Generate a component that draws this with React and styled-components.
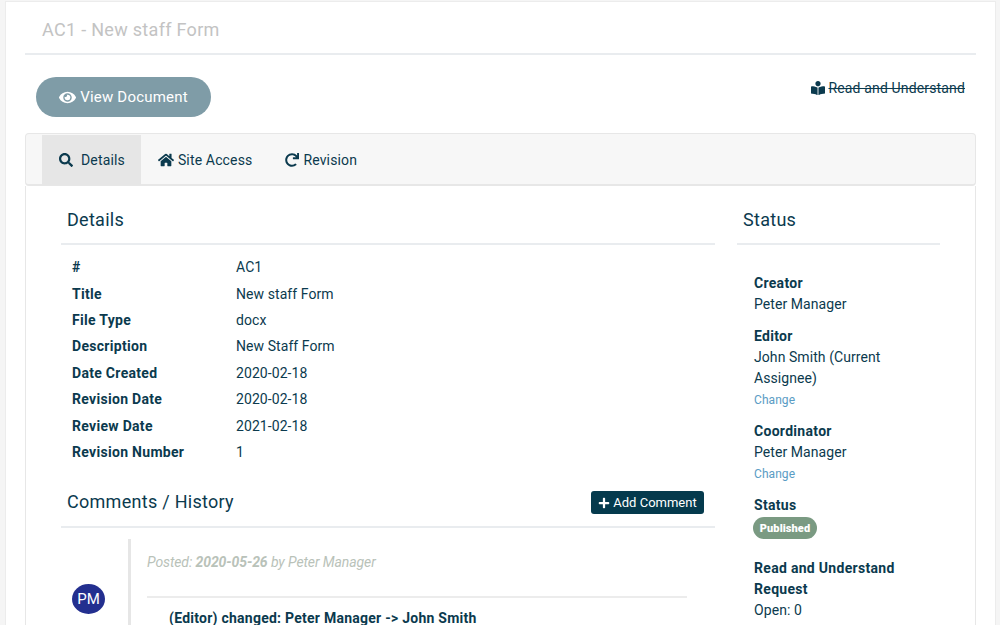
import React from 'react';
import styled, { createGlobalStyle } from 'styled-components';
import { FaEye, FaSearch, FaHome, FaRedo, FaBookReader, FaPlus } from 'react-icons/fa';

const ink = '#0b3a4e';

const Global = createGlobalStyle`
  html, body { margin: 0; height: 625px; overflow: hidden; background: #f5f5f5; }
  body { font-family: Roboto, "Liberation Sans", sans-serif; font-size: 14px; letter-spacing: .07px; color: ${ink}; }
  * { box-sizing: border-box; }
`;

const Panel = styled.main`
  margin: 1px 4px 0 5px;
  height: 640px;
  background: #fff;
  border: 1px solid #ececec;
  padding: 0 19px;
`;
const TitleBar = styled.header`
  height: 53px;
  border-bottom: 2px solid #e9ecef;
  padding: 17px 0 0 17px;
  font-size: 18px;
  letter-spacing: .3px;
  line-height: 22px;
  color: #c3c3c3;
`;
const ActionRow = styled.div`
  display: flex;
  justify-content: space-between;
  padding: 22px 11px 0 11px;
  height: 78px;
`;
const ViewButton = styled.button`
  width: 175px;
  height: 40px;
  border: 0;
  border-radius: 20px;
  background: #7f9ca7;
  color: #fff;
  font: 15px Roboto, sans-serif;
  letter-spacing: .2px;
  display: flex;
  align-items: center;
  justify-content: center;
  gap: 4px;
  padding: 0;
`;
const ReadLink = styled.div`
  display: flex;
  align-items: center;
  gap: 3px;
  height: 16px;
  margin-top: 3px;
  font-size: 14px;
  letter-spacing: .15px;
  text-decoration: line-through;
  color: ${ink};
`;
const TabsCard = styled.nav`
  height: 53px;
  background: #f7f7f7;
  border: 1px solid #e7e7e7;
  border-bottom-width: 2px;
  border-radius: 4px;
  display: flex;
  padding: 1px 0 0 16px;
`;
const Tab = styled.div`
  display: flex;
  align-items: center;
  gap: ${p => p.$gap}px;
  height: 50px;
  padding: 0 16px 0 17px;
  background: ${p => (p.$active ? '#e6e6e6' : 'transparent')};
  font-size: 14px;
  letter-spacing: .15px;
`;
const BodyCard = styled.section`
  border: 1px solid #e7e7e7;
  border-top: 0;
  height: 460px;
  padding: 0 35px;
  display: flex;
  gap: 22px;
`;
const MainCol = styled.div`
  width: 654px;
  flex: none;
`;
const SideCol = styled.aside`
  width: 203px;
  flex: none;
`;
const Heading = styled.div`
  display: flex;
  justify-content: space-between;
  align-items: center;
  height: 59px;
  border-bottom: 2px solid #e9ecef;
  padding: 9px 11px 0 6px;
  font-size: 18px;
  letter-spacing: .28px;
  color: ${ink};
`;
const InfoList = styled.dl`
  display: grid;
  grid-template-columns: 164px 1fr;
  grid-auto-rows: 26.43px;
  align-items: center;
  margin: 8.9px 0 0;
  padding-left: 11px;
`;
const Label = styled.dt`
  font-weight: 700;
  letter-spacing: .3px;
`;
const Value = styled.dd`
  margin: 0;
`;
const SubHeading = styled(Heading)`
  height: 57px;
  margin-top: 6px;
  padding-top: 6px;
`;
const AddButton = styled.button`
  height: 23px;
  width: 113px;
  margin-top: 2px;
  border: 0;
  border-radius: 3px;
  background: #053a4d;
  color: #fff;
  font: 13px Roboto, sans-serif;
  display: flex;
  align-items: center;
  justify-content: center;
  gap: 3px;
  padding: 0;
`;
const CommentRow = styled.div`
  display: flex;
  margin-top: 11px;
`;
const AvatarCell = styled.div`
  width: 67px;
  flex: none;
  padding: 45px 0 0 11px;
`;
const Avatar = styled.div`
  width: 33px;
  height: 30px;
  border-radius: 50%;
  background: #232f8f;
  color: #fff;
  display: flex;
  align-items: center;
  justify-content: center;
  font-size: 15px;
`;
const CommentBody = styled.div`
  width: 559px;
  border-left: 3px solid #e6e6e6;
  padding: 15px 0 0 16px;
`;
const Posted = styled.div`
  font-size: 14px;
  letter-spacing: -.1px;
  line-height: 17px;
  font-style: italic;
  color: #b9c2b9;
`;
const CommentText = styled.div`
  margin-top: 25px;
  border-top: 2px solid #ececec;
  padding: 11px 0 0 22px;
  font-weight: 700;
  letter-spacing: .25px;
  line-height: 18px;
`;
const StatusList = styled.div`
  padding: 28px 0 0 17px;
  line-height: 21px;
`;
const Group = styled.div`
  margin-bottom: ${p => p.$gap}px;
`;
const Strong = styled.div`
  font-weight: 700;
  letter-spacing: .3px;
`;
const ChangeLink = styled.a`
  display: block;
  font-size: 12px;
  color: #5a9cc4;
  line-height: 23px;
`;
const Badge = styled.span`
  display: flex;
  align-items: center;
  justify-content: center;
  width: 64px;
  height: 22px;
  margin: 1px 0 0 -1px;
  border-radius: 11px;
  background: #7a9a82;
  color: #fff;
  font-size: 11px;
  font-weight: 900;
`;

const details = [
  ['#', 'AC1'],
  ['Title', 'New staff Form'],
  ['File Type', 'docx'],
  ['Description', 'New Staff Form'],
  ['Date Created', '2020-02-18'],
  ['Revision Date', '2020-02-18'],
  ['Review Date', '2021-02-18'],
  ['Revision Number', '1'],
];

export default function App() {
  return (
    <>
      <Global />
      <Panel>
        <TitleBar>AC1 - New staff Form</TitleBar>
        <ActionRow>
          <ViewButton><FaEye size={17} /> View Document</ViewButton>
          <ReadLink><FaBookReader size={14} /> Read and Understand</ReadLink>
        </ActionRow>
        <TabsCard>
          <Tab $active $gap={8}><FaSearch size={14} /> Details</Tab>
          <Tab $gap={4}><FaHome size={16} /> Site Access</Tab>
          <Tab $gap={4}><FaRedo size={14} /> Revision</Tab>
        </TabsCard>
        <BodyCard>
          <MainCol>
            <Heading>Details</Heading>
            <InfoList>
              {details.map(([k, v]) => (
                <React.Fragment key={k}>
                  <Label>{k}</Label>
                  <Value>{v}</Value>
                </React.Fragment>
              ))}
            </InfoList>
            <SubHeading>
              Comments / History
              <AddButton><FaPlus size={12} /> Add Comment</AddButton>
            </SubHeading>
            <CommentRow>
              <AvatarCell><Avatar>PM</Avatar></AvatarCell>
              <CommentBody>
                <Posted>Posted: <b>2020-05-26</b> by Peter Manager</Posted>
                <CommentText>(Editor) changed: Peter Manager -&gt; John Smith</CommentText>
              </CommentBody>
            </CommentRow>
          </MainCol>
          <SideCol>
            <Heading>Status</Heading>
            <StatusList>
              <Group $gap={11}><Strong>Creator</Strong>Peter Manager</Group>
              <Group $gap={9}>
                <Strong>Editor</Strong>John Smith (Current Assignee)
                <ChangeLink>Change</ChangeLink>
              </Group>
              <Group $gap={9}>
                <Strong>Coordinator</Strong>Peter Manager
                <ChangeLink>Change</ChangeLink>
              </Group>
              <Group $gap={19}><Strong>Status</Strong><Badge>Published</Badge></Group>
              <Group $gap={10}><Strong>Read and Understand Request</Strong>Open: 0</Group>
            </StatusList>
          </SideCol>
        </BodyCard>
      </Panel>
    </>
  );
}
